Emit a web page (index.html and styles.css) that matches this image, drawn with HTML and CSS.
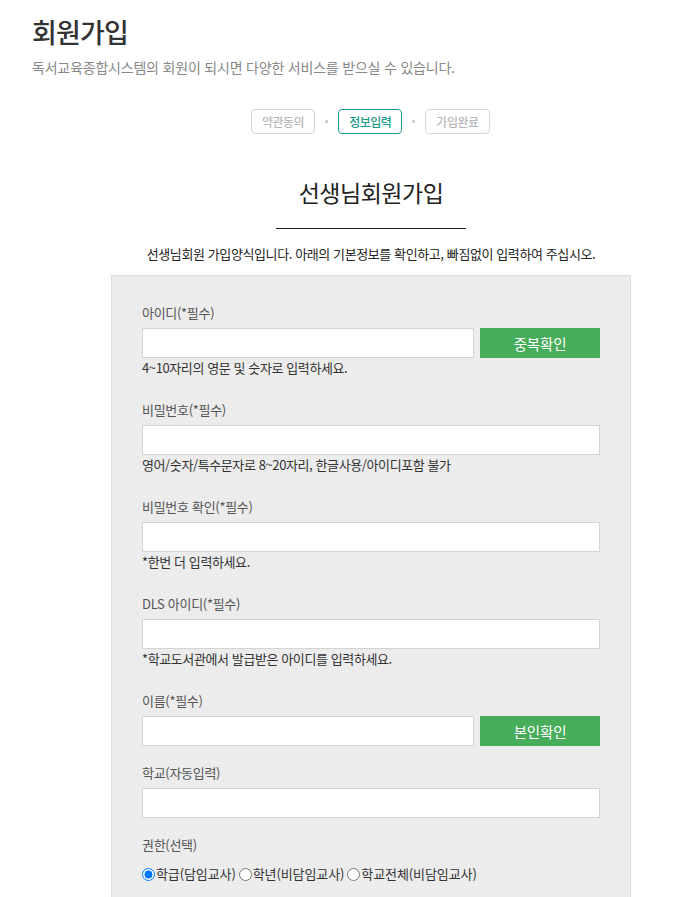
FILE: index.html
```html
<!DOCTYPE html>
<html lang="ko">
<head>
<meta charset="utf-8">
<title>회원가입</title>
<link rel="stylesheet" href="styles.css">
</head>
<body>
<div class="page">
  <header class="page-head">
    <h1 class="page-title">회원가입</h1>
    <p class="page-sub">독서교육종합시스템의 회원이 되시면 다양한 서비스를 받으실 수 있습니다.</p>
  </header>

  <ol class="steps">
    <li class="step">약관동의</li>
    <li class="step-dot"></li>
    <li class="step step-on">정보입력</li>
    <li class="step-dot"></li>
    <li class="step">가입완료</li>
  </ol>

  <section class="join">
    <h2 class="join-title">선생님회원가입</h2>
    <div class="join-rule"></div>
    <p class="join-intro">선생님회원 가입양식입니다. 아래의 기본정보를 확인하고, 빠짐없이 입력하여 주십시오.</p>

    <form class="join-box">
      <div class="field">
        <label class="field-label">아이디(*필수)</label>
        <div class="field-row">
          <input class="field-input" type="text">
          <button type="button" class="field-btn">중복확인</button>
        </div>
        <p class="field-hint">4~10자리의 영문 및 숫자로 입력하세요.</p>
      </div>

      <div class="field">
        <label class="field-label">비밀번호(*필수)</label>
        <div class="field-row">
          <input class="field-input" type="password">
        </div>
        <p class="field-hint">영어/숫자/특수문자로 8~20자리, 한글사용/아이디포함 불가</p>
      </div>

      <div class="field">
        <label class="field-label">비밀번호 확인(*필수)</label>
        <div class="field-row">
          <input class="field-input" type="password">
        </div>
        <p class="field-hint">*한번 더 입력하세요.</p>
      </div>

      <div class="field">
        <label class="field-label">DLS 아이디(*필수)</label>
        <div class="field-row">
          <input class="field-input" type="text">
        </div>
        <p class="field-hint">*학교도서관에서 발급받은 아이디를 입력하세요.</p>
      </div>

      <div class="field">
        <label class="field-label">이름(*필수)</label>
        <div class="field-row">
          <input class="field-input" type="text">
          <button type="button" class="field-btn">본인확인</button>
        </div>
      </div>

      <div class="field">
        <label class="field-label">학교(자동입력)</label>
        <div class="field-row">
          <input class="field-input" type="text">
        </div>
      </div>

      <div class="field">
        <label class="field-label">권한(선택)</label>
        <div class="radios">
          <label class="radio"><input type="radio" name="role" checked>학급(담임교사)</label>
          <label class="radio"><input type="radio" name="role">학년(비담임교사)</label>
          <label class="radio"><input type="radio" name="role">학교전체(비담임교사)</label>
        </div>
      </div>
    </form>
  </section>
</div>
</body>
</html>
```

FILE: styles.css
```css
* { box-sizing: border-box; }
html, body { margin: 0; padding: 0; background: #fff; }
body {
  font-family: "Noto Sans CJK KR", "Noto Sans", sans-serif;
  color: #333;
}
.page { padding: 0 0 0 32px; width: 682px; }

.page-head { padding-top: 14px; }
.page-title {
  margin: 0;
  font-size: 27px;
  line-height: 36px;
  font-weight: 500;
  letter-spacing: -0.8px;
  color: #333;
}
.page-sub {
  margin: 7px 0 0;
  font-size: 14px;
  line-height: 20px;
  letter-spacing: -0.2px;
  color: #888;
}

.steps {
  list-style: none;
  margin: 32px 0 0;
  padding: 0;
  display: flex;
  align-items: center;
  padding-left: 219px;
}
.step {
  height: 25px;
  padding: 0 10px;
  border: 1px solid #d6d6d6;
  border-radius: 4px;
  font-size: 12px;
  line-height: 23px;
  font-weight: 500;
  color: #b8b8b8;
  letter-spacing: -0.5px;
}
.step-on { border-color: #1d9a8c; color: #1d9a8c; }
.step-dot {
  width: 3px; height: 3px;
  background: #cfcfcf;
  margin: 0 10px;
}

.join { width: 520px; margin-left: 79px; }
.join-title {
  margin: 43px 0 0;
  text-align: center;
  font-size: 23px;
  line-height: 30px;
  font-weight: 400;
  letter-spacing: -0.5px;
  color: #222;
}
.join-rule {
  width: 190px;
  height: 1px;
  background: #222;
  margin: 21px auto 0;
}
.join-intro {
  margin: 16px 0 0;
  text-align: center;
  font-size: 13px;
  line-height: 18px;
  letter-spacing: -0.4px;
  color: #222;
}

.join-box {
  display: block;
  margin-top: 12px;
  background: #ececec;
  border: 1px solid #dcdcdc;
  padding: 27px 30px 20px;
}
.field { margin-bottom: 17px; }
.field-label {
  display: block;
  font-size: 13px;
  line-height: 20px;
  color: #555;
  letter-spacing: -0.3px;
}
.field-row {
  display: flex;
  gap: 6px;
  margin-top: 5px;
}
.field-input {
  flex: 1;
  height: 30px;
  border: 1px solid #d4d4d4;
  background: #fff;
  margin: 0;
  padding: 0 6px;
  font: inherit;
}
.field-btn {
  width: 120px;
  height: 30px;
  border: 0;
  margin: 0;
  background: #47ad5b;
  color: #fff;
  font-family: inherit;
  font-size: 14.5px;
  letter-spacing: -0.2px;
}
.field-hint {
  margin: 0;
  font-size: 13px;
  line-height: 20px;
  padding-bottom: 5px;
  color: #333;
  letter-spacing: -0.4px;
}
.radios {
  display: flex;
  align-items: center;
  margin-top: 9px;
  font-size: 13px;
  line-height: 20px;
  color: #333;
  letter-spacing: -0.1px;
}
.radio { display: flex; align-items: center; margin-right: 3px; }
.radio input { margin: 0 1px 0 0; width: 13px; height: 13px; }
```
